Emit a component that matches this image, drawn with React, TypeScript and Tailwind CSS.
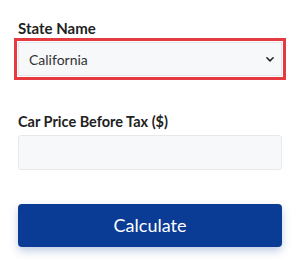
import React from "react";

export default function App() {
  return (
    <div
      className="w-[300px] h-[265px] bg-white overflow-hidden"
      style={{ fontFamily: 'Lato, "Noto Sans", sans-serif' }}
    >
      <div className="px-[18px] pt-[18px]">
        <label className="block text-[15px] font-bold text-[#222] leading-[20px]">State Name</label>
        <div className="-mx-[4px] border-[3px] border-[#e53a40] p-px">
          <div className="relative h-[34px] bg-[#f6f8fa] border border-[#e3e6ea] flex items-center pl-[10px]">
            <span className="text-[14px] text-[#333]">California</span>
            <svg
              className="absolute right-[6px] top-1/2 -translate-y-1/2"
              width="10"
              height="10"
              viewBox="0 0 16 16"
            >
              <path d="M3 6l5 5 5-5" fill="none" stroke="#222" strokeWidth="2.4" strokeLinecap="round" strokeLinejoin="round" />
            </svg>
          </div>
        </div>
        <label className="block mt-[32px] text-[14.5px] font-bold text-[#222] leading-[20px]">
          Car Price Before Tax ($)
        </label>
        <div className="mt-[3px] h-[35px] bg-[#f6f8fa] border border-[#e6e8eb] rounded-[3px]" />
        <button className="mt-[34px] w-full h-[43px] bg-[#0a3b95] rounded-[4px] text-white text-[18px] shadow-[0_4px_8px_rgba(10,59,149,0.25)]">
          Calculate
        </button>
      </div>
    </div>
  );
}
